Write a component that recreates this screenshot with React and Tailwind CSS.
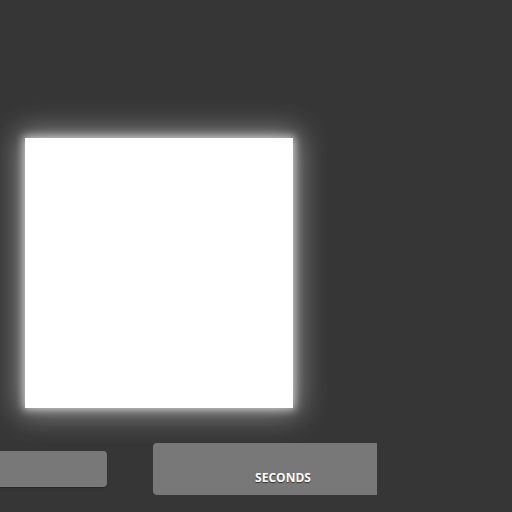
export default function App() {
  return (
    <div className="w-[512px] h-[512px] bg-[#363636] overflow-hidden relative flex flex-col" style={{fontFamily: '"Open Sans", "DejaVu Sans", sans-serif'}}>
      <div className="h-[138px] shrink-0" />
      <div className="flex pl-[25px]">
        <div className="w-[268px] h-[270px] bg-white shadow-[0_0_8px_2px_rgba(255,255,255,0.6),0_0_28px_6px_rgba(255,255,255,0.45)]" />
      </div>
      <div className="flex items-start mt-[35px]">
        <div className="w-[107px] h-[36px] mt-[8px] bg-[#787878] rounded-r-[4px] shadow-[0_1px_1px_rgba(0,0,0,0.3)]" />
        <div className="ml-[46px] w-[224px] overflow-hidden">
          <div className="w-[260px] h-[52px] bg-[#787878] rounded-[4px] flex items-end justify-center pb-[11px] shadow-[0_1px_1px_rgba(0,0,0,0.3)]">
            <span className="text-white text-[12px] font-bold leading-none [text-shadow:0_1px_1px_rgba(0,0,0,0.6)]">SECONDS</span>
          </div>
        </div>
      </div>
    </div>
  );
}
